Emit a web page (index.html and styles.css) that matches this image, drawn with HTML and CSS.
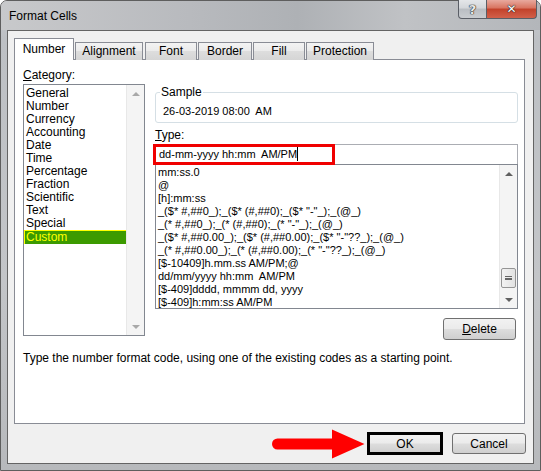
FILE: index.html
```html
<!DOCTYPE html>
<html lang="en">
<head>
  <meta charset="UTF-8">
  <title>Format Cells</title>
  <link rel="stylesheet" href="styles.css">
</head>
<body>
  <div class="window">
    <div class="titlebar">
      <span class="title">Format Cells</span>
      <div class="caption-btns">
        <span class="cap-btn help">?</span>
        <span class="cap-btn close">&#x2715;</span>
      </div>
    </div>
    <div class="client">
      <div class="tabs">
        <div class="tab active t-number">Number</div>
        <div class="tab t-align">Alignment</div>
        <div class="tab t-font">Font</div>
        <div class="tab t-border">Border</div>
        <div class="tab t-fill">Fill</div>
        <div class="tab t-prot">Protection</div>
      </div>
      <div class="panel">
        <div class="panel-top">
          <div class="left-col">
            <div class="label"><u>C</u>ategory:</div>
            <div class="listbox cat-list">
              <ul class="items">
                <li>General</li>
                <li>Number</li>
                <li>Currency</li>
                <li>Accounting</li>
                <li>Date</li>
                <li>Time</li>
                <li>Percentage</li>
                <li>Fraction</li>
                <li>Scientific</li>
                <li>Text</li>
                <li>Special</li>
                <li class="selected">Custom</li>
              </ul>
              <div class="scrollbar disabled">
                <span class="arrow up"></span>
                <span class="track"></span>
                <span class="arrow down"></span>
              </div>
            </div>
          </div>
          <div class="right-col">
            <fieldset class="sample">
              <legend>Sample</legend>
              <div class="sample-value">26-03-2019 08:00&nbsp; AM</div>
            </fieldset>
            <div class="label type-label"><u>T</u>ype:</div>
            <div class="type-input">
              <span class="highlight">dd-mm-yyyy hh:mm&nbsp; AM/PM<span class="caret"></span></span>
            </div>
            <div class="listbox fmt-list">
              <ul class="items">
                <li>mm:ss.0</li>
                <li>@</li>
                <li>[h]:mm:ss</li>
                <li>_($* #,##0_);_($* (#,##0);_($* "-"_);_(@_)</li>
                <li>_(* #,##0_);_(* (#,##0);_(* "-"_);_(@_)</li>
                <li>_($* #,##0.00_);_($* (#,##0.00);_($* "-"??_);_(@_)</li>
                <li>_(* #,##0.00_);_(* (#,##0.00);_(* "-"??_);_(@_)</li>
                <li>[$-10409]h.mm.ss AM/PM;@</li>
                <li>dd/mm/yyyy hh:mm&nbsp; AM/PM</li>
                <li>[$-409]dddd, mmmm dd, yyyy</li>
                <li>[$-409]h:mm:ss AM/PM</li>
              </ul>
              <div class="scrollbar">
                <span class="arrow up"></span>
                <span class="track"><span class="thumb"></span></span>
                <span class="arrow down"></span>
              </div>
            </div>
            <div class="delete-row">
              <button class="btn delete-btn"><u>D</u>elete</button>
            </div>
          </div>
        </div>
        <p class="hint">Type the number format code, using one of the existing codes as a starting point.</p>
      </div>
      <div class="footer">
        <svg class="pointer" width="93" height="30" viewBox="0 0 93 30">
          <path d="M5.5 9.5 H60 V0.5 L92.5 15 L60 29.5 V20.5 H5.5 A5.5 5.5 0 0 1 5.5 9.5 Z" fill="#f00"/>
        </svg>
        <button class="btn ok-btn">OK</button>
        <button class="btn cancel-btn">Cancel</button>
      </div>
    </div>
  </div>
</body>
</html>
```

FILE: styles.css
```css
body {
  margin: 0;
  padding: 0;
  font-family: "Liberation Sans", Arial, sans-serif;
  font-size: 12px;
  color: #000;
  background: #fff;
}
.window {
  width: 541px;
  height: 471px;
  box-sizing: border-box;
  border: 1px solid #5e5e5e;
  border-radius: 7px 7px 0 0;
  background: linear-gradient(to bottom, #c9cbcf 0%, #bdc0c4 8%, #c3c5c8 60%, #b7b9bc 100%);
  padding: 0 6px 6px 6px;
  display: flex;
  flex-direction: column;
}
.titlebar {
  height: 29px;
  display: flex;
  justify-content: space-between;
  align-items: flex-start;
  background: linear-gradient(to right, #c8c9cb 0%, #b8babe 35%, #aeb1b5 55%, #c0c2c5 75%, #b3b6ba 100%);
  margin: 0 -6px;
  padding: 0 3px 0 8px;
  border-radius: 6px 6px 0 0;
}
.title {
  margin-top: 8px;
  font-size: 12px;
  color: #000;
}
.caption-btns {
  display: flex;
  margin-top: -1px;
}
.cap-btn {
  height: 19px;
  box-sizing: border-box;
  display: flex;
  align-items: center;
  justify-content: center;
  border: 1px solid #5a5e66;
  border-top: none;
  color: #fff;
  font-weight: bold;
  text-shadow: 0 0 1px #222, 0 0 1px #222, 0 0 1px #222;
}
.help {
  width: 29px;
  border-radius: 0 0 0 4px;
  background: linear-gradient(to bottom, #e4e6e9 0%, #d3d6da 45%, #b9bdc2 50%, #c9ccd0 100%);
  font-family: "DejaVu Sans", sans-serif;
  font-size: 13px;
  color: #e8e8e8;
}
.close {
  width: 50px;
  border-left: none;
  border-radius: 0 0 4px 0;
  background: linear-gradient(to bottom, #e8a99e 0%, #d8735f 45%, #c2412a 50%, #d2604a 100%);
  font-family: "DejaVu Sans", sans-serif;
  font-size: 12px;
}
.client {
  flex: 1;
  background: #f0f0f0;
  border: 1px solid #646464;
  padding: 7px 7px 7px 6px;
  display: flex;
  flex-direction: column;
}
.tabs {
  display: flex;
  align-items: flex-end;
  height: 22px;
  margin-bottom: -1px;
  position: relative;
  z-index: 1;
}
.tab {
  height: 18px;
  box-sizing: border-box;
  border: 1px solid #898c95;
  border-bottom: none;
  background: linear-gradient(to bottom, #f3f3f3 0%, #ebebeb 45%, #dddddd 50%, #d5d5d5 100%);
  text-align: center;
  line-height: 17px;
  margin-left: 1px;
}
.tab.active {
  height: 22px;
  background: #fff;
  line-height: 20px;
  margin-left: 0;
}
.t-number { width: 60px; }
.t-align { width: 68px; }
.t-font { width: 52px; margin-left: 2px; }
.t-border { width: 54px; }
.t-fill { width: 52px; }
.t-prot { width: 68px; }
.panel {
  height: 365px;
  width: 511px;
  box-sizing: border-box;
  border: 1px solid #898c95;
  background: #fff;
  padding: 8px 6px 0 8px;
}
.panel-top {
  display: flex;
  gap: 10px;
}
.label {
  line-height: 14px;
  height: 14px;
}
.left-col {
  width: 122px;
}
.left-col .label {
  margin-bottom: 2px;
}
.listbox {
  border: 1px solid #828790;
  box-sizing: border-box;
  display: flex;
  background: #fff;
  overflow: hidden;
}
.cat-list {
  height: 252px;
}
.items {
  list-style: none;
  margin: 0;
  padding: 2px 0 0 0;
  flex: 1;
  overflow: hidden;
}
.items li {
  height: 13px;
  line-height: 13px;
  padding-left: 2px;
  white-space: nowrap;
}
.cat-list .items li.selected {
  background: #3c9a00;
  color: #ffff00;
  border-left: 1px solid #ffff00;
  border-top: 1px solid #ffff00;
  box-sizing: border-box;
  padding-left: 1px;
  line-height: 12px;
  height: 14px;
}
.scrollbar {
  width: 17px;
  display: flex;
  flex-direction: column;
  background: #f4f4f4;
  border-left: 1px solid #e8e8e8;
}
.scrollbar .track {
  flex: 1;
  display: flex;
  flex-direction: column;
  justify-content: flex-end;
  padding-bottom: 3px;
}
.arrow {
  height: 17px;
  display: flex;
  align-items: center;
  justify-content: center;
}
.arrow::after {
  content: "";
  border-left: 4px solid transparent;
  border-right: 4px solid transparent;
}
.arrow.up::after {
  border-bottom: 4px solid #606060;
}
.arrow.down::after {
  border-top: 4px solid #606060;
}
.scrollbar.disabled .arrow.up::after {
  border-bottom-color: #a8a8a8;
}
.scrollbar.disabled .arrow.down::after {
  border-top-color: #a8a8a8;
}
.thumb {
  height: 20px;
  margin: 0 1px;
  border: 1px solid #959595;
  border-radius: 2px;
  background: linear-gradient(to right, #f3f3f3, #e2e2e2);
  box-sizing: border-box;
  display: flex;
  flex-direction: column;
  align-items: center;
  justify-content: center;
  gap: 2px;
}
.thumb::before, .thumb::after {
  content: "";
  width: 7px;
  height: 1px;
  background: #666;
  box-shadow: 0 2px 0 #666;
}
.thumb::after {
  box-shadow: none;
}
.right-col {
  width: 363px;
  display: flex;
  flex-direction: column;
}
.sample {
  margin: 17px 0 0 0;
  padding: 0 6px 0 7px;
  border: 1px solid #d5dfe5;
  border-radius: 3px;
  height: 38px;
  box-sizing: border-box;
}
.sample legend {
  padding: 0 1px;
  margin-left: -3px;
  line-height: 14px;
}
.sample-value {
  margin-top: 5px;
  line-height: 14px;
  font-size: 11px;
}
.type-label {
  margin-top: 5px;
}
.type-input {
  margin-top: 2px;
  height: 20px;
  box-sizing: border-box;
  border: 1px solid #abadb3;
  border-bottom: none;
  position: relative;
}
.highlight {
  position: absolute;
  left: -3px;
  top: -1px;
  width: 182px;
  height: 21px;
  box-sizing: border-box;
  border: 3px solid #f00000;
  padding-left: 3px;
  line-height: 15px;
  font-size: 11px;
}
.caret {
  display: inline-block;
  width: 1px;
  height: 14px;
  background: #000;
  vertical-align: -3px;
}
.fmt-list {
  height: 145px;
}
.fmt-list .items {
  padding-top: 1px;
  font-size: 11px;
}
.delete-row {
  display: flex;
  justify-content: flex-end;
  margin-top: 9px;
  padding-right: 2px;
}
.btn {
  font-family: "Liberation Sans", Arial, sans-serif;
  font-size: 12px;
  color: #000;
  border: 1px solid #707070;
  border-radius: 3px;
  background: linear-gradient(to bottom, #f2f2f2 0%, #ebebeb 48%, #dddddd 52%, #cfcfcf 100%);
  padding: 0;
  cursor: pointer;
}
.delete-btn {
  width: 73px;
  height: 22px;
}
.hint {
  margin: 11px 0 0 0;
  line-height: 14px;
}
.footer {
  display: flex;
  align-items: center;
  justify-content: flex-end;
  margin-top: 8px;
  height: 23px;
}
.pointer {
  margin-right: 2px;
}
.ok-btn {
  width: 76px;
  height: 23px;
  border: 3px solid #000;
  border-radius: 0;
}
.cancel-btn {
  width: 74px;
  height: 21px;
  margin-left: 9px;
}
```
